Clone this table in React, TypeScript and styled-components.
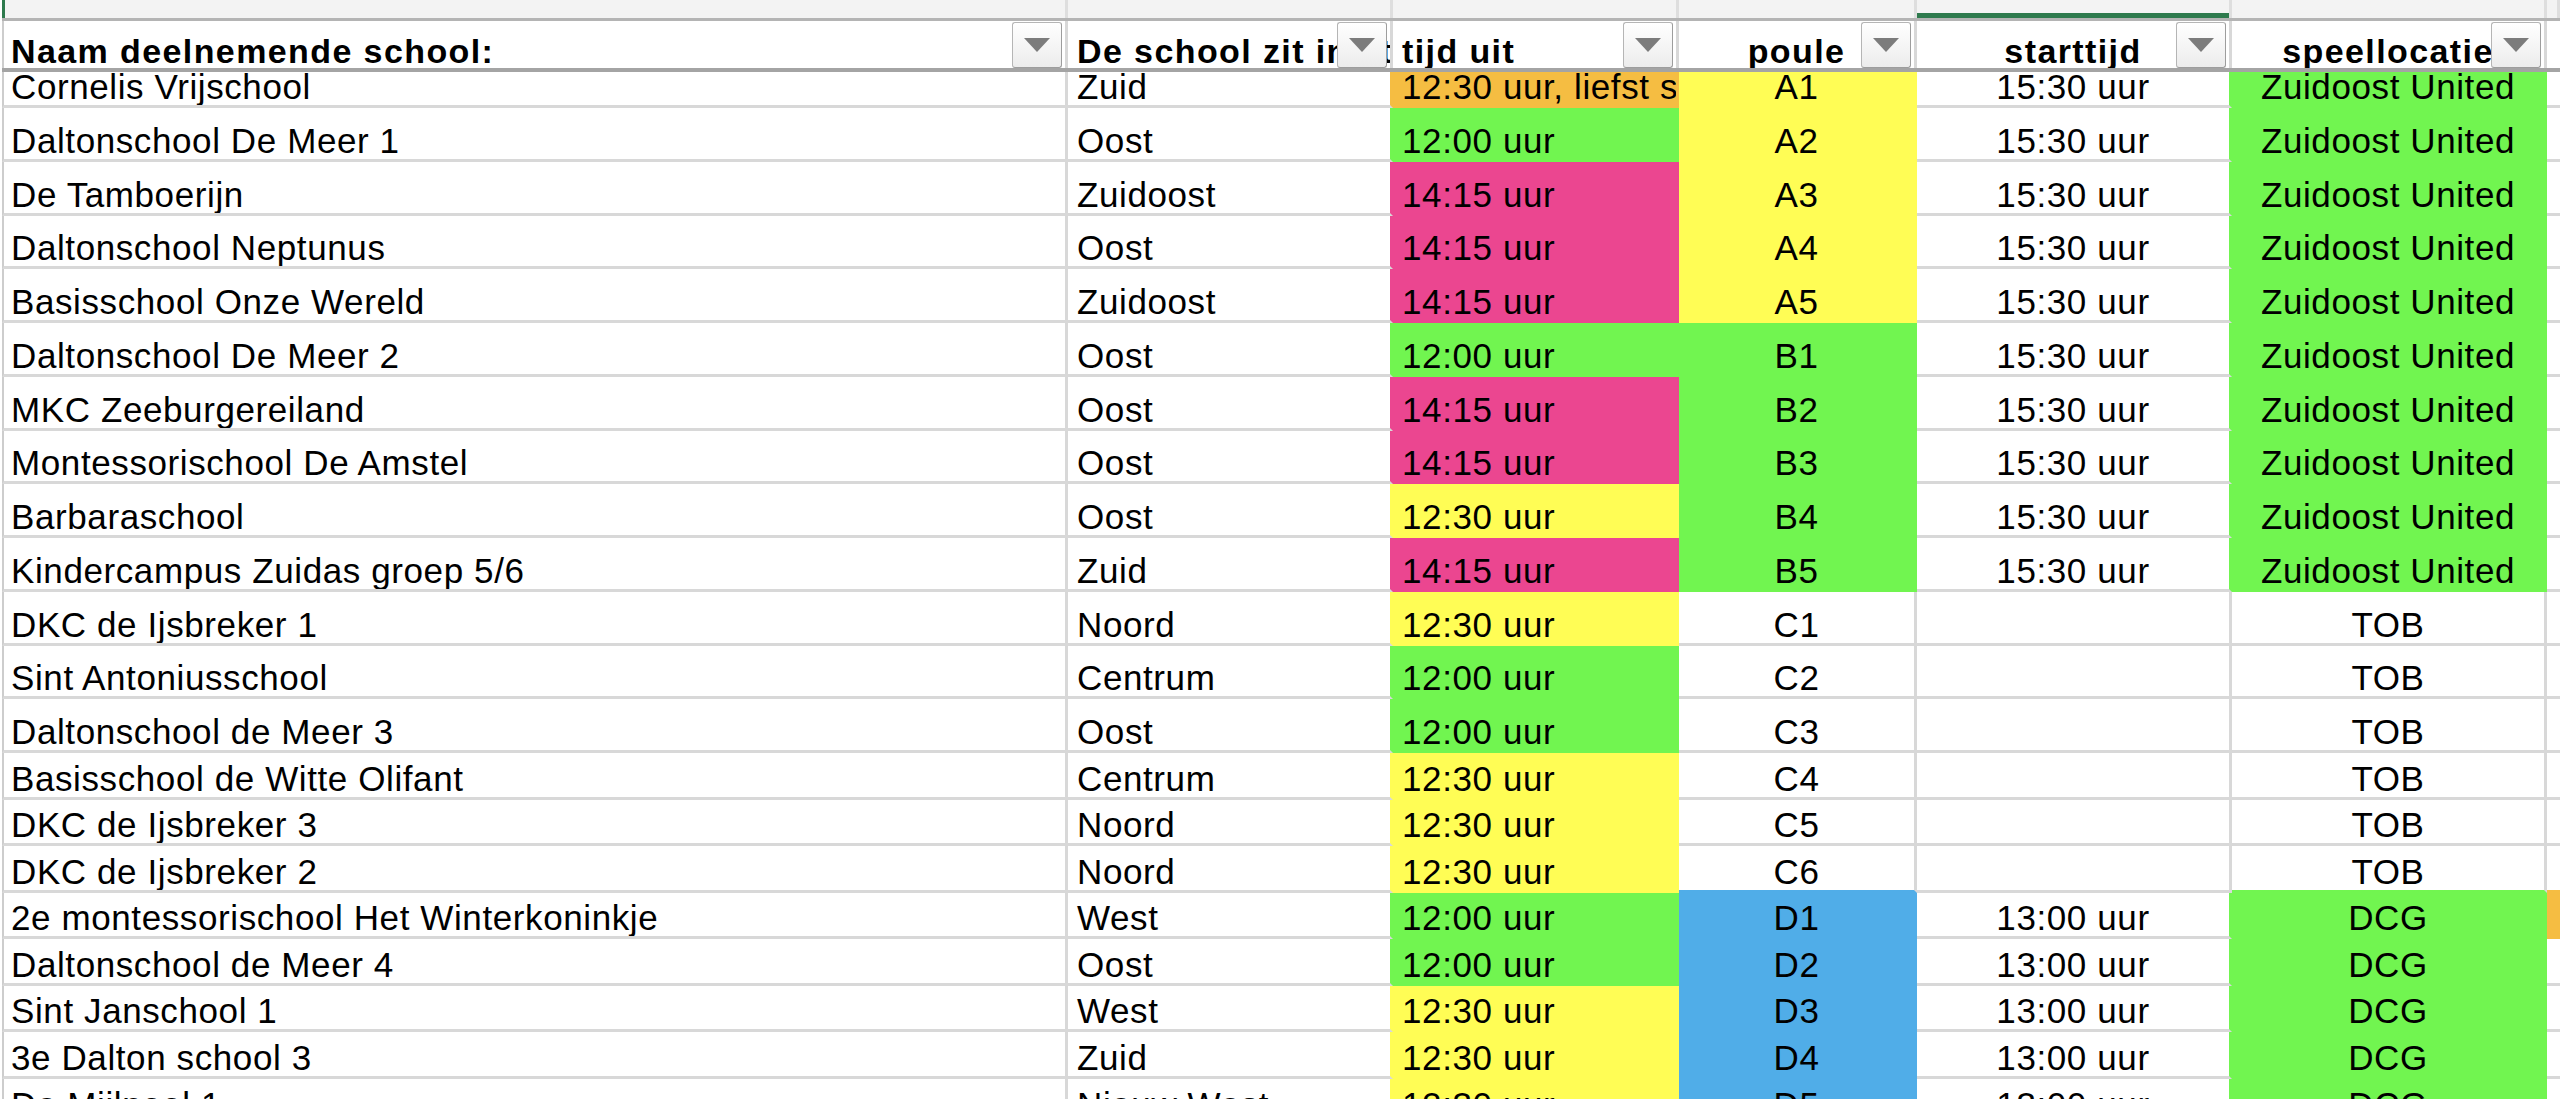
import React from 'react';
import styled, { createGlobalStyle } from 'styled-components';

const GRID = '#d8d8d8';
const COLS = '1066px 325px 286px 238px 315px 315px 1fr';

const FILLS = {
  orange: '#f5bd42',
  green: '#71f550',
  pink: '#eb4690',
  yellow: '#fffd55',
  blue: '#50ade8',
};

type Fill = keyof typeof FILLS | undefined;
type Align = 'left' | 'center';

type RowData = {
  name: string;
  area: string;
  time: string;
  timeFill: Fill;
  poule: string;
  pouleFill?: Fill;
  start: string;
  place: string;
  placeFill?: Fill;
  extraFill?: Fill;
  short?: boolean;
  partial?: boolean;
};

const rows: RowData[] = [
  { name: 'Cornelis Vrijschool', area: 'Zuid', time: '12:30 uur, liefst samen met Zuid', timeFill: 'orange', poule: 'A1', pouleFill: 'yellow', start: '15:30 uur', place: 'Zuidoost United', placeFill: 'green', partial: true },
  { name: 'Daltonschool De Meer 1', area: 'Oost', time: '12:00 uur', timeFill: 'green', poule: 'A2', pouleFill: 'yellow', start: '15:30 uur', place: 'Zuidoost United', placeFill: 'green' },
  { name: 'De Tamboerijn', area: 'Zuidoost', time: '14:15 uur', timeFill: 'pink', poule: 'A3', pouleFill: 'yellow', start: '15:30 uur', place: 'Zuidoost United', placeFill: 'green' },
  { name: 'Daltonschool Neptunus', area: 'Oost', time: '14:15 uur', timeFill: 'pink', poule: 'A4', pouleFill: 'yellow', start: '15:30 uur', place: 'Zuidoost United', placeFill: 'green' },
  { name: 'Basisschool Onze Wereld', area: 'Zuidoost', time: '14:15 uur', timeFill: 'pink', poule: 'A5', pouleFill: 'yellow', start: '15:30 uur', place: 'Zuidoost United', placeFill: 'green' },
  { name: 'Daltonschool De Meer 2', area: 'Oost', time: '12:00 uur', timeFill: 'green', poule: 'B1', pouleFill: 'green', start: '15:30 uur', place: 'Zuidoost United', placeFill: 'green' },
  { name: 'MKC Zeeburgereiland', area: 'Oost', time: '14:15 uur', timeFill: 'pink', poule: 'B2', pouleFill: 'green', start: '15:30 uur', place: 'Zuidoost United', placeFill: 'green' },
  { name: 'Montessorischool De Amstel', area: 'Oost', time: '14:15 uur', timeFill: 'pink', poule: 'B3', pouleFill: 'green', start: '15:30 uur', place: 'Zuidoost United', placeFill: 'green' },
  { name: 'Barbaraschool', area: 'Oost', time: '12:30 uur', timeFill: 'yellow', poule: 'B4', pouleFill: 'green', start: '15:30 uur', place: 'Zuidoost United', placeFill: 'green' },
  { name: 'Kindercampus Zuidas groep 5/6', area: 'Zuid', time: '14:15 uur', timeFill: 'pink', poule: 'B5', pouleFill: 'green', start: '15:30 uur', place: 'Zuidoost United', placeFill: 'green' },
  { name: 'DKC de Ijsbreker 1', area: 'Noord', time: '12:30 uur', timeFill: 'yellow', poule: 'C1', start: '', place: 'TOB' },
  { name: 'Sint Antoniusschool', area: 'Centrum', time: '12:00 uur', timeFill: 'green', poule: 'C2', start: '', place: 'TOB' },
  { name: 'Daltonschool de Meer 3', area: 'Oost', time: '12:00 uur', timeFill: 'green', poule: 'C3', start: '', place: 'TOB' },
  { name: 'Basisschool de Witte Olifant', area: 'Centrum', time: '12:30 uur', timeFill: 'yellow', poule: 'C4', start: '', place: 'TOB', short: true },
  { name: 'DKC de Ijsbreker 3', area: 'Noord', time: '12:30 uur', timeFill: 'yellow', poule: 'C5', start: '', place: 'TOB', short: true },
  { name: 'DKC de Ijsbreker 2', area: 'Noord', time: '12:30 uur', timeFill: 'yellow', poule: 'C6', start: '', place: 'TOB', short: true },
  { name: '2e montessorischool Het Winterkoninkje', area: 'West', time: '12:00 uur', timeFill: 'green', poule: 'D1', pouleFill: 'blue', start: '13:00 uur', place: 'DCG', placeFill: 'green', extraFill: 'orange', short: true },
  { name: 'Daltonschool de Meer 4', area: 'Oost', time: '12:00 uur', timeFill: 'green', poule: 'D2', pouleFill: 'blue', start: '13:00 uur', place: 'DCG', placeFill: 'green', short: true },
  { name: 'Sint Janschool 1', area: 'West', time: '12:30 uur', timeFill: 'yellow', poule: 'D3', pouleFill: 'blue', start: '13:00 uur', place: 'DCG', placeFill: 'green', short: true },
  { name: '3e Dalton school 3', area: 'Zuid', time: '12:30 uur', timeFill: 'yellow', poule: 'D4', pouleFill: 'blue', start: '13:00 uur', place: 'DCG', placeFill: 'green', short: true },
  { name: 'De Mijlpaal 1', area: 'Nieuw West', time: '12:30 uur', timeFill: 'yellow', poule: 'D5', pouleFill: 'blue', start: '13:00 uur', place: 'DCG', placeFill: 'green', short: true },
];

const headers: { label: string; align: Align }[] = [
  { label: 'Naam deelnemende school:', align: 'left' },
  { label: 'De school zit in stadsdeel', align: 'left' },
  { label: 'tijd uit', align: 'left' },
  { label: 'poule', align: 'center' },
  { label: 'starttijd', align: 'center' },
  { label: 'speellocatie', align: 'center' },
];

const aligns: Align[] = ['left', 'left', 'left', 'center', 'center', 'center', 'left'];

const GlobalStyle = createGlobalStyle`
  html, body {
    margin: 0;
    height: 100%;
    overflow: hidden;
    background: #fff;
  }
  body {
    font-family: 'Liberation Sans', Arial, sans-serif;
    color: #000;
  }
`;

const Sheet = styled.div`
  height: 100vh;
  overflow: hidden;
  padding-left: 2px;
  display: flex;
  flex-direction: column;
`;

const Band = styled.div`
  display: grid;
  grid-template-columns: ${COLS};
  height: 21px;
  box-sizing: border-box;
  background: #f3f3f3;
  border-bottom: 3px solid #b4b4b4;
  flex-shrink: 0;
`;

const BandCell = styled.div<{ $selected?: boolean; $first?: boolean }>`
  border-right: 3px solid #dedede;
  border-left: ${(p) => (p.$first ? '3px solid #2e7a4d' : '0')};
  box-shadow: ${(p) => (p.$selected ? 'inset 0 -5px 0 #2e7a4d' : 'none')};
`;

const HeaderRow = styled.div`
  display: grid;
  grid-template-columns: ${COLS};
  height: 51px;
  box-sizing: border-box;
  border-bottom: 4px solid #a4a4a4;
  flex-shrink: 0;
`;

const HeaderCell = styled.div<{ $align: Align; $first?: boolean }>`
  position: relative;
  overflow: hidden;
  white-space: nowrap;
  display: flex;
  align-items: flex-end;
  justify-content: ${(p) => (p.$align === 'center' ? 'center' : 'flex-start')};
  padding: 0 9px 0 ${(p) => (p.$first ? 7 : 9)}px;
  border-right: 3px solid ${GRID};
  border-left: ${(p) => (p.$first ? '2px solid #cdcdcd' : '0')};
  font-size: 34px;
  line-height: 34px;
  font-weight: bold;
  letter-spacing: 1.4px;
`;

const FilterButton = styled.div`
  position: absolute;
  top: 1px;
  right: 3px;
  width: 50px;
  height: 46px;
  box-sizing: border-box;
  border: 1px solid #b5b5b5;
  border-right-color: #9d9d9d;
  border-bottom-color: #9d9d9d;
  border-radius: 3px;
  background: linear-gradient(#ffffff, #ececec);
  display: flex;
  align-items: center;
  justify-content: center;
`;

const Body = styled.div`
  flex: 1;
  overflow: hidden;
  display: flex;
  flex-direction: column;
`;

const Row = styled.div<{ $height: number }>`
  display: grid;
  grid-template-columns: ${COLS};
  height: ${(p) => p.$height}px;
  flex-shrink: 0;
`;

const Cell = styled.div<{ $fill?: string; $right: string; $bottom: string; $align: Align; $first?: boolean }>`
  box-sizing: border-box;
  overflow: hidden;
  white-space: nowrap;
  display: flex;
  align-items: flex-end;
  justify-content: ${(p) => (p.$align === 'center' ? 'center' : 'flex-start')};
  padding: 0 9px 1px ${(p) => (p.$first ? 7 : 9)}px;
  background: ${(p) => p.$fill ?? '#fff'};
  border-right: 3px solid ${(p) => p.$right};
  border-bottom: 3px solid ${(p) => p.$bottom};
  border-left: ${(p) => (p.$first ? '2px solid #cdcdcd' : '0')};
  font-size: 35px;
  line-height: 35px;
  letter-spacing: 0.6px;
`;

const fillsOf = (r?: RowData): Fill[] =>
  r
    ? [undefined, undefined, r.timeFill, r.pouleFill, undefined, r.placeFill, r.extraFill]
    : [];

const textsOf = (r: RowData) => [r.name, r.area, r.time, r.poule, r.start, r.place, ''];

const color = (f: Fill) => (f ? FILLS[f] : undefined);

const rowHeight = (r: RowData) => (r.partial ? 36 : r.short ? 46.57 : 53.75);

const Caret = () => (
  <svg width="26" height="14" viewBox="0 0 26 14">
    <polygon points="0,0 26,0 13,14" fill="#7c7c7c" />
  </svg>
);

export default function App() {
  return (
    <>
      <GlobalStyle />
      <Sheet>
        <Band>
          {aligns.map((_, i) => (
            <BandCell key={i} $first={i === 0} $selected={i === 4} />
          ))}
        </Band>
        <HeaderRow>
          {headers.map((h, i) => (
            <HeaderCell key={h.label} $align={h.align} $first={i === 0}>
              {h.label}
              <FilterButton>
                <Caret />
              </FilterButton>
            </HeaderCell>
          ))}
          <HeaderCell $align="left" />
        </HeaderRow>
        <Body>
          {rows.map((row, ri) => {
            const fills = fillsOf(row);
            const below = fillsOf(rows[ri + 1]);
            return (
              <Row key={row.name} $height={rowHeight(row)}>
                {textsOf(row).map((text, ci) => {
                  const own = color(fills[ci]);
                  return (
                    <Cell
                      key={ci}
                      $first={ci === 0}
                      $align={aligns[ci]}
                      $fill={own}
                      $right={own ?? color(fills[ci + 1]) ?? GRID}
                      $bottom={own ?? color(below[ci]) ?? GRID}
                    >
                      {text}
                    </Cell>
                  );
                })}
              </Row>
            );
          })}
        </Body>
      </Sheet>
    </>
  );
}
